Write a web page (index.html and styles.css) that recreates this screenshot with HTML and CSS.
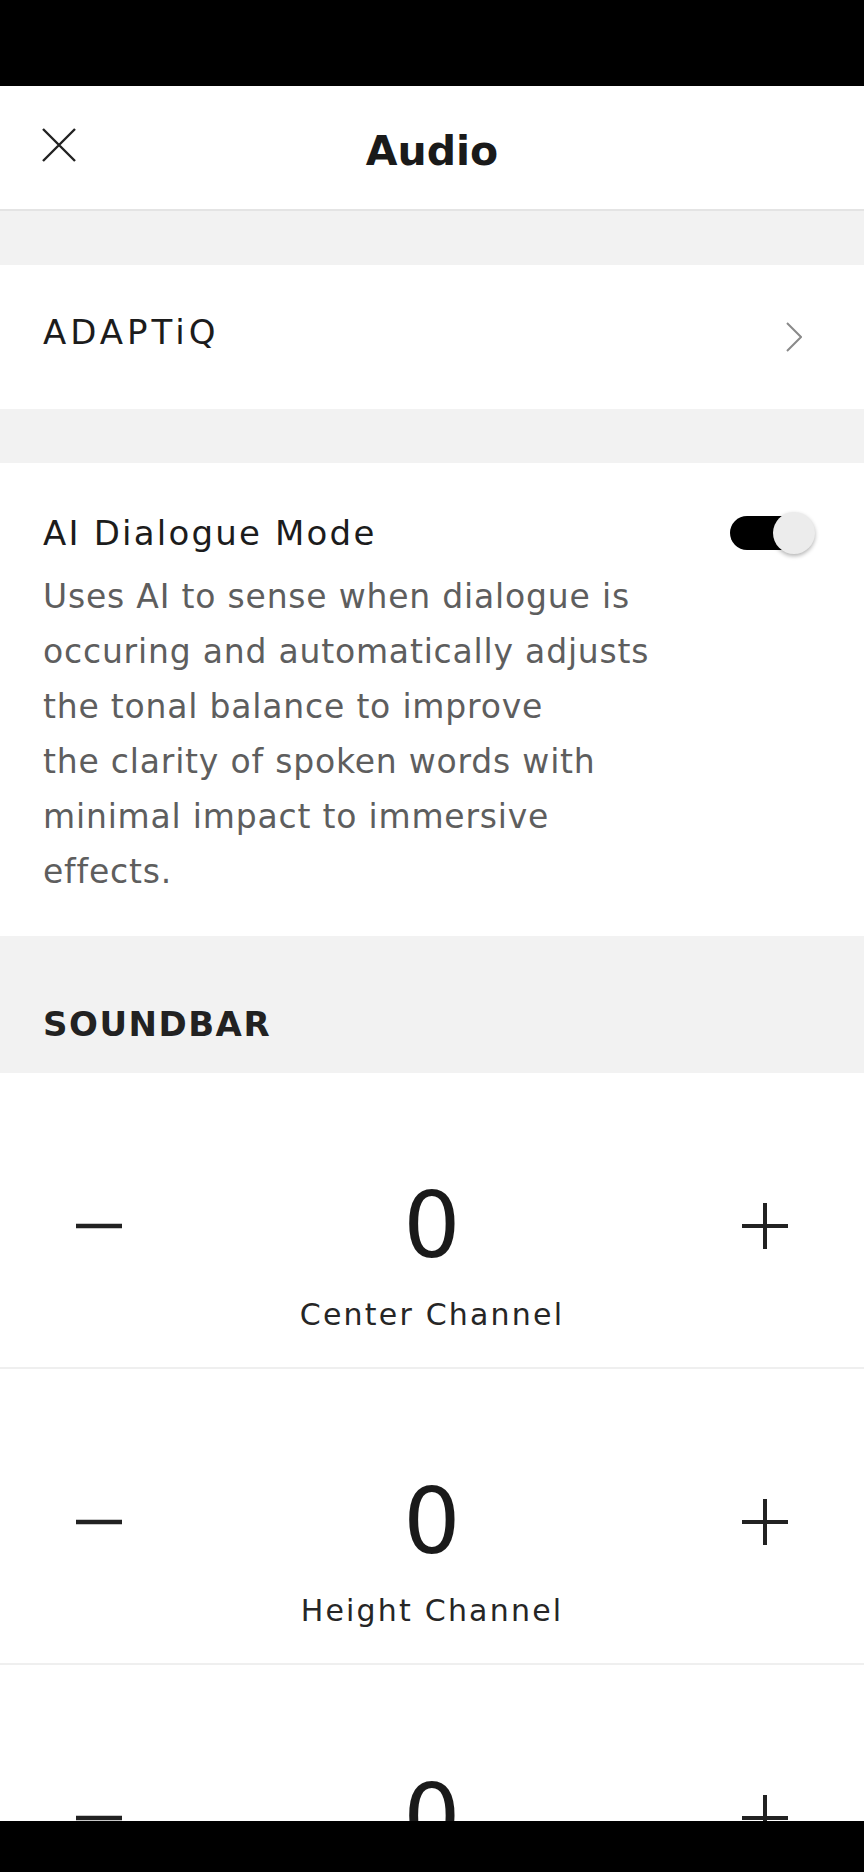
FILE: index.html
```html
<!DOCTYPE html>
<html lang="en">
<head>
  <meta charset="UTF-8">
  <title>Audio</title>
  <meta name="viewport" content="width=device-width, initial-scale=1.0">
  <link rel="stylesheet" href="styles.css">
</head>
<body>
  <div class="statusbar"></div>

  <header class="topbar">
    <button class="close" aria-label="Close">
      <svg width="34" height="34" viewBox="0 0 34 34"><path d="M1 1L33 33M33 1L1 33" stroke="#222" stroke-width="2.4" fill="none"/></svg>
    </button>
    <h1>Audio</h1>
    <span></span>
  </header>

  <div class="gap"></div>

  <a class="row" href="#">
    <span class="label">ADAPTiQ</span>
    <svg class="chevron" width="16" height="30" viewBox="0 0 16 30"><path d="M1 1L15 15L1 29" stroke="#8a8a8a" stroke-width="2" fill="none"/></svg>
  </a>

  <div class="gap"></div>

  <section class="setting">
    <div class="setting-head">
      <span class="label">AI Dialogue Mode</span>
      <span class="toggle on"><span class="knob"></span></span>
    </div>
    <p class="desc">Uses AI to sense when dialogue is<br>occuring and automatically adjusts<br>the tonal balance to improve<br>the clarity of spoken words with<br>minimal impact to immersive<br>effects.</p>
  </section>

  <h2 class="group">SOUNDBAR</h2>

  <div class="stepper">
    <div class="stepper-ctrl">
      <button class="step" aria-label="Decrease"><svg width="46" height="46" viewBox="0 0 46 46"><path d="M0 23H46" stroke="#222" stroke-width="4.5"/></svg></button>
      <span class="value">0</span>
      <button class="step" aria-label="Increase"><svg width="46" height="46" viewBox="0 0 46 46"><path d="M0 23H46M23 0V46" stroke="#222" stroke-width="4"/></svg></button>
    </div>
    <div class="stepper-name">Center Channel</div>
  </div>

  <div class="stepper">
    <div class="stepper-ctrl">
      <button class="step" aria-label="Decrease"><svg width="46" height="46" viewBox="0 0 46 46"><path d="M0 23H46" stroke="#222" stroke-width="4.5"/></svg></button>
      <span class="value">0</span>
      <button class="step" aria-label="Increase"><svg width="46" height="46" viewBox="0 0 46 46"><path d="M0 23H46M23 0V46" stroke="#222" stroke-width="4"/></svg></button>
    </div>
    <div class="stepper-name">Height Channel</div>
  </div>

  <div class="stepper">
    <div class="stepper-ctrl">
      <button class="step" aria-label="Decrease"><svg width="46" height="46" viewBox="0 0 46 46"><path d="M0 23H46" stroke="#222" stroke-width="4.5"/></svg></button>
      <span class="value">0</span>
      <button class="step" aria-label="Increase"><svg width="46" height="46" viewBox="0 0 46 46"><path d="M0 23H46M23 0V46" stroke="#222" stroke-width="4"/></svg></button>
    </div>
    <div class="stepper-name">Bass</div>
  </div>

  <div class="navbar"></div>
</body>
</html>
```

FILE: styles.css
```css
body {
  margin: 0;
  background: #ffffff;
  color: #1c1c1c;
  font-family: "DejaVu Sans", sans-serif;
}
button {
  background: none;
  border: none;
  padding: 0;
  cursor: pointer;
}
.statusbar {
  height: 86px;
  background: #000000;
}
.navbar {
  position: fixed;
  left: 0;
  right: 0;
  bottom: 0;
  height: 51px;
  background: #000000;
}

/* header */
.topbar {
  display: grid;
  grid-template-columns: 1fr auto 1fr;
  align-items: center;
  height: 123px;
  padding: 0 42px;
  border-bottom: 2px solid #e4e4e4;
}
.close {
  justify-self: start;
  width: 34px;
  height: 34px;
  margin-top: -6px;
}
.close svg { display: block; }
.topbar h1 {
  margin: 0;
  padding-top: 6px;
  font-size: 41px;
  font-weight: 700;
  color: #1a1a1a;
}

.gap {
  height: 54px;
  background: #f2f2f2;
}

/* rows */
.label {
  font-size: 34px;
  line-height: 44px;
  letter-spacing: 2.2px;
  color: #1c1c1c;
}
.row {
  display: flex;
  align-items: center;
  justify-content: space-between;
  height: 144px;
  padding: 0 62px 0 43px;
  text-decoration: none;
}
.row .label {
  padding-bottom: 10px;
  letter-spacing: 4px;
}
.chevron { display: block; }

.setting {
  padding: 48px 49px 37px 43px;
}
.setting-head {
  display: flex;
  align-items: center;
  justify-content: space-between;
}
.desc {
  margin: 14px 0 0;
  font-size: 33px;
  line-height: 55px;
  letter-spacing: 0.8px;
  color: #5e5e5e;
}

/* switch */
.toggle {
  position: relative;
  width: 85px;
  height: 42px;
}
.toggle::before {
  content: "";
  position: absolute;
  left: 0;
  top: 4px;
  width: 70px;
  height: 34px;
  border-radius: 17px;
  background: #000000;
}
.toggle .knob {
  position: absolute;
  left: 43px;
  top: 0;
  width: 42px;
  height: 42px;
  border-radius: 50%;
  background: #ececec;
  box-shadow: 0 2px 4px rgba(0, 0, 0, 0.3);
}

.group {
  margin: 0;
  padding: 68px 43px 29px;
  background: #f2f2f2;
  font-size: 34px;
  line-height: 40px;
  font-weight: 700;
  letter-spacing: 1.5px;
  color: #222222;
}

/* steppers */
.stepper {
  padding: 103px 0 32px;
  border-bottom: 2px solid #efefef;
  text-align: center;
}
.stepper-ctrl {
  display: flex;
  align-items: center;
  justify-content: space-between;
  padding: 0 76px;
}
.step svg { display: block; }
.value {
  font-size: 90px;
  line-height: 100px;
  color: #1a1a1a;
}
.stepper-name {
  margin-top: 19px;
  font-size: 30px;
  line-height: 40px;
  letter-spacing: 2.2px;
  color: #262626;
}
```
